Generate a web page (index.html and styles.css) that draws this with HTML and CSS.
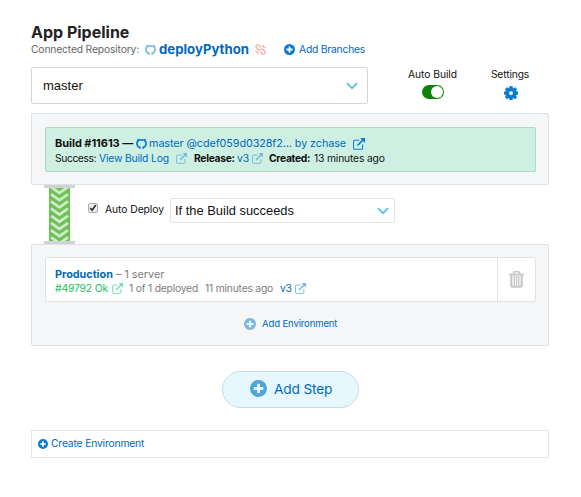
FILE: index.html
```html
<!DOCTYPE html>
<html lang="en">
<head>
<meta charset="utf-8">
<title>App Pipeline</title>
<link rel="stylesheet" href="styles.css">
</head>
<body>
<svg class="defs" aria-hidden="true">
  <symbol id="github" viewBox="0 0 16 16"><path fill="none" stroke="currentColor" stroke-width="2.500" d="M5.600 14.200A6.600 6.600 0 0 1 2.700 4M10.400 14.200A6.600 6.600 0 0 0 13.300 4M5 3.300q3-1.100 6 0"/><path fill="currentColor" d="M1.800 1.200Q3.800 1 6 2.600L3 6.200Q1.400 4 1.800 1.200zM14.200 1.200Q12.200 1 10 2.600L13 6.200Q14.600 4 14.200 1.200zM4.600 12.300h2.200v3.500H4.600zM9.200 12.300h2.200v3.500H9.200z"/></symbol>
  <symbol id="plus" viewBox="0 0 16 16"><path fill="currentColor" fill-rule="evenodd" d="M8 0a8 8 0 1 1 0 16A8 8 0 0 1 8 0zM6.700 3.500v3.200H3.500v2.600h3.200v3.200h2.600V9.300h3.200V6.700H9.300V3.500z"/></symbol>
  <symbol id="external" viewBox="0 0 16 16"><path fill="none" stroke="currentColor" stroke-width="1.400" d="M8.500 3H2.200Q.8 3 .8 4.400v9.300q0 1.400 1.400 1.400h9.300q1.400 0 1.400-1.400V8.500"/><path fill="none" stroke="currentColor" stroke-width="2.200" d="M6 10l7.500-7.500"/><path fill="currentColor" d="M9.500 0H16v6.500z"/></symbol>
  <symbol id="unlink" viewBox="0 0 16 16"><g fill="none" stroke="currentColor" stroke-width="1.600" stroke-linecap="round"><path d="M7.800 4.500L6.300 2.300a2.600 2.600 0 0 0-4.300 3L4.500 8q1.500 1.300 3.300.3M8.300 11.500l1.500 2.200a2.600 2.600 0 0 0 4.300-3L11.600 8q-1.500-1.300-3.300-.3M11 4l1.800-2M12.500 5.500H15M4.800 12.200L3 14M3.500 10.500H1"/></g></symbol>
  <symbol id="chevron" viewBox="0 0 12 8"><path fill="none" stroke="#4cc4ee" stroke-width="1.700" d="M1 1.200l5 5 5-5"/></symbol>
</svg>

<main class="page">
  <h1 class="title">App Pipeline</h1>
  <div class="repo">
    <span>Connected Repository:</span>
    <svg class="icon soft"><use href="#github"/></svg>
    <a class="repo-name">deployPython</a>
    <svg class="icon unlink"><use href="#unlink"/></svg>
    <svg class="icon link"><use href="#plus"/></svg>
    <a class="tight">Add Branches</a>
  </div>

  <div class="controls">
    <div class="select branch"><span>master</span><svg class="chevron"><use href="#chevron"/></svg></div>
    <div class="control"><span class="wide">Auto Build</span><i class="toggle"></i></div>
    <div class="control settings"><span>Settings</span>
      <svg class="gear" viewBox="0 0 16 16"><path fill="#0b7bd0" stroke="#0b7bd0" stroke-width=".5" fill-rule="evenodd" d="M6.400.3h3.200l.3 2 1.100.5 1.700-1.200 2 2-1.200 1.700.5 1.100 2 .3v2.900l-2 .4-.5 1.100 1.200 1.700-2 2-1.700-1.200-1.100.5-.3 1.900H6.400l-.3-1.900-1.100-.5-1.700 1.200-2-2 1.200-1.700-.5-1.100-1.900-.4V6.700l1.900-.3.5-1.100-1.200-1.700 2-2L5 2.800l1.100-.5zM8 5.600a2.500 2.500 0 1 0 0 5 2.500 2.500 0 0 0 0-5z"/></svg>
    </div>
  </div>

  <section class="panel">
    <div class="build">
      <div class="row build-head">
        <b>Build #11613 —</b>
        <svg class="icon link"><use href="#github"/></svg>
        <a>master @cdef059d0328f2... by zchase</a>
        <svg class="icon link large"><use href="#external"/></svg>
      </div>
      <div class="row build-info">
        <span class="success">Success:</span>
        <a>View Build Log</a>
        <svg class="icon soft"><use href="#external"/></svg>
        <b>Release:</b>
        <a>v3</a>
        <svg class="icon soft"><use href="#external"/></svg>
        <b>Created:</b>
        <span>13 minutes ago</span>
      </div>
    </div>
  </section>

  <div class="step">
    <div class="conveyor">
      <svg class="belt" viewBox="0 0 21 53">
        <defs><pattern id="tread" width="21" height="7.200" patternUnits="userSpaceOnUse" patternTransform="translate(0 -2)"><path fill="none" stroke="#d6ecd0" stroke-width="2.700" d="M2 -6.200l8.500 6 8.500-6M2 1l8.500 6L19 1M2 8.200l8.500 6 8.500-6"/></pattern></defs>
        <rect width="21" height="53" fill="#6cc154"/><rect width="21" height="53" fill="url(#tread)"/>
      </svg>
    </div>
    <svg class="check" viewBox="0 0 10 10"><rect x=".5" y=".5" width="9" height="9" rx="1.500" fill="#ededed" stroke="#aaa"/><path fill="none" stroke="#333" stroke-width="1.700" d="M2.300 5.200l1.900 2L7.700 2"/></svg>
    <span class="wide">Auto Deploy</span>
    <div class="select trigger"><span>If the Build succeeds</span><svg class="chevron"><use href="#chevron"/></svg></div>
  </div>

  <section class="panel environments">
    <div class="card">
      <div class="card-body">
        <div class="row card-head"><a class="env-name">Production</a><span>– 1 server</span></div>
        <div class="row card-info">
          <span class="ok">#49792 Ok</span>
          <svg class="icon ok-soft"><use href="#external"/></svg>
          <span>1 of 1 deployed</span>
          <span>11 minutes ago</span>
          <a>v3</a>
          <svg class="icon soft"><use href="#external"/></svg>
        </div>
      </div>
      <div class="card-delete">
        <svg class="trash" viewBox="0 0 15 17"><path fill="none" stroke="#c8c8c8" stroke-width="1.400" d="M4.500 3V1.900Q4.500.7 5.700.7h3.600q1.200 0 1.200 1.200V3"/><path fill="#c8c8c8" d="M0 2.600h15v1.800H0z"/><path fill="none" stroke="#c8c8c8" stroke-width="2.200" d="M2.300 4v10.400q0 1.300 1.300 1.300h7.800q1.300 0 1.300-1.300V4"/><path fill="none" stroke="#c8c8c8" stroke-width="1.400" d="M5.300 4.500v10M7.500 4.500v10M9.700 4.500v10"/></svg>
      </div>
    </div>
    <div class="add-env"><svg class="icon"><use href="#plus"/></svg><a>Add Environment</a></div>
  </section>

  <div class="add-step"><svg class="icon"><use href="#plus"/></svg><a>Add Step</a></div>
  <div class="create"><svg class="icon link"><use href="#plus"/></svg><a>Create Environment</a></div>
</main>
</body>
</html>
```
FILE: styles.css
```css
* { box-sizing: border-box; }
body {
  margin: 0;
  background: #fff;
  color: #111;
  font: 10.3px/15px Inter, "Liberation Sans", sans-serif;
  letter-spacing: -.16px;
  white-space: nowrap;
}
svg { display: block; }
.defs { width: 0; height: 0; position: absolute; }
.page { width: 518px; margin: 24px 0 0 31px; }
a { color: #0069c0; }

.icon { width: 11px; height: 11px; color: #0b7bd0; }
.icon.soft { color: #78b9df; }
.icon.ok-soft { color: #7be0ab; }
.icon.unlink { color: #f49a9a; }
.icon.large { width: 12px; height: 12px; }

.title { margin: 0; font-size: 16px; line-height: 17px; letter-spacing: 0; color: #222; }
.repo {
  display: grid;
  grid-template-columns: 114px 14px 96px 29px 15px auto;
  align-items: center;
  height: 17px;
  color: #666;
}
.repo-name { font-size: 13.2px; font-weight: 700; letter-spacing: 0; }
.tight { letter-spacing: -.2px; }
.wide { letter-spacing: -.05px; }

.controls { display: flex; margin-top: 9px; }
.select {
  display: flex;
  align-items: center;
  justify-content: space-between;
  border: 1px solid #d5d6d8;
  border-radius: 2px;
  background: #fff;
  font-family: "Liberation Sans", sans-serif;
  letter-spacing: 0;
}
.branch { width: 337px; height: 37px; padding: 0 9px 0 11px; font-size: 13px; }
.chevron { width: 12px; height: 8px; }
.control { display: flex; flex-direction: column; align-items: center; width: 49px; margin-left: 40px; }
.settings { width: 40px; margin-left: 33px; }
.toggle {
  width: 22px;
  height: 14px;
  margin-top: 3px;
  padding: 1px;
  border-radius: 7px;
  background: #0a840a;
}
.toggle::after { content: ""; display: block; width: 12px; height: 12px; margin-left: 8px; border-radius: 50%; background: #fff; }
.gear { width: 14px; height: 14px; margin: 4px 0 0 1px; }

.panel {
  height: 72px;
  margin-top: 9px;
  padding: 13px 12px 0 13px;
  border: 1px solid #dfe1e3;
  border-radius: 2px;
  background: #f5f6f8;
}
.build {
  height: 45px;
  padding: 8px 9px 0;
  border: 1px solid #add8c6;
  border-radius: 2px;
  background: #cef0e2;
}
.row { display: grid; align-items: center; height: 15px; }
.build-head {
  grid-template-columns: 81px 13px 204px auto;
  font-size: 10.8px;
  letter-spacing: -.08px;
}
.build-head b { font-size: 11px; letter-spacing: -.05px; }
.build-info { grid-template-columns: 44px 77px 18px 43px 15px 17px 45px auto; }
.build-info b { letter-spacing: -.3px; }
.success { letter-spacing: -.4px; }

.step { display: flex; height: 59px; padding-left: 13px; }
.conveyor { width: 31px; border: solid #d0d2d4; border-width: 3px 0; }
.belt { width: 21px; height: 53px; margin-left: 5px; }
.check { width: 10px; height: 10px; margin: 18px 7px 0 13px; }
.step > span { width: 65px; margin-top: 17px; }
.trigger { width: 225px; height: 25px; margin-top: 13px; padding: 0 5px 0 4px; border-color: #e2e3e5; font-size: 12.900px; }

.environments { height: 102px; margin-top: 0; padding-top: 12px; }
.card { display: flex; height: 45px; border: 1px solid #e1e2e4; border-radius: 2px; background: #fff; color: #7d7d7d; }
.card-body { flex: 1; padding: 9px 9px 0; }
.card-head { grid-template-columns: 61px auto; font-size: 10.8px; letter-spacing: 0; }
.card-info { margin-top: -1px; }
.env-name { font-weight: 700; }
.card-info { grid-template-columns: 57px 17px 76px 75px 15px auto; letter-spacing: -.2px; }
.ok { color: #19bd5d; letter-spacing: -.12px; }
.card-delete { display: flex; align-items: center; justify-content: center; width: 38px; border-left: 1px solid #e1e2e4; }
.trash { width: 15px; height: 17px; }
.add-env { display: flex; align-items: center; gap: 6px; height: 15px; margin: 14px 0 0 199px; font-size: 9.600px; }
.add-env .icon { width: 12px; height: 12px; color: #78b7e4; }

.add-step {
  display: flex;
  align-items: center;
  gap: 7px;
  width: 137px;
  height: 37px;
  margin: 25px 0 0 191px;
  padding-left: 27px;
  border: 1px solid #c5dce8;
  border-radius: 19px;
  background: #e6f7fe;
  font-size: 13.700px;
}
.add-step .icon { width: 17px; height: 17px; color: #4ea5de; margin-top: -2px; }
.create {
  display: flex;
  align-items: center;
  gap: 3px;
  height: 28px;
  margin-top: 22px;
  padding: 0 0 1px 6px;
  border: 1px solid #e5e6e8;
}
.create .icon { width: 10px; height: 10px; }
```
